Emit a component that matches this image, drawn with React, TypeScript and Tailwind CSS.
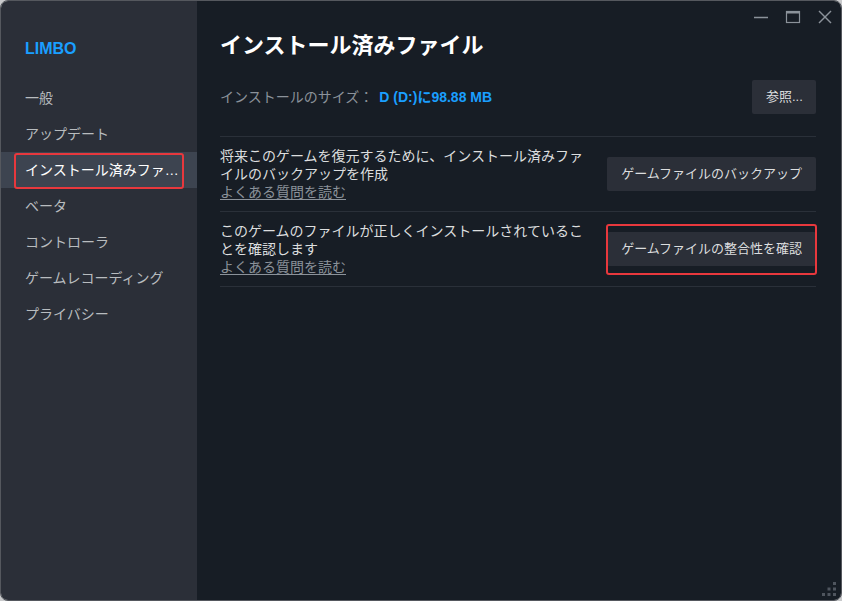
import React from 'react'

const FONT = {
  fontFamily: '"Liberation Sans", "Noto Sans CJK JP", sans-serif',
}

// --- Sidebar ---

const MENU = [
  '一般',
  'アップデート',
  'インストール済みファイル',
  'ベータ',
  'コントローラ',
  'ゲームレコーディング',
  'プライバシー',
]

function Sidebar({ active }: { active: number }) {
  return (
    <aside className="w-[196px] shrink-0 bg-[#2b2f38] flex flex-col">
      <div className="pl-[24px] pt-[38px] h-[58px] leading-[20px] text-[16px] font-bold text-[#1a9fff]">
        LIMBO
      </div>
      <nav className="mt-[21px] flex flex-col">
        {MENU.map((item, i) => (
          <div
            key={item}
            className={`relative h-[36px] flex items-center pl-[24px] pr-[18px] text-[14px] ${
              i === active ? 'bg-[#3d4450] text-white' : 'text-[#b8bcbf]'
            }`}
          >
            <span className="truncate">{i === active ? 'インストール済みファ…' : item}</span>
            {i === active && (
              <span className="absolute left-[13px] right-[13px] top-[1px] -bottom-[1px] border-2 border-[#e8383d] rounded-[3px]" />
            )}
          </div>
        ))}
      </nav>
    </aside>
  )
}

// --- Buttons ---

function Button({ children, className = '' }: { children: React.ReactNode; className?: string }) {
  return (
    <button
      className={`h-[34px] px-[14px] rounded-[2px] bg-[#2b2f38] text-[13px] text-[#dcdedf] whitespace-nowrap ${className}`}
    >
      {children}
    </button>
  )
}

interface RowProps {
  text: string
  action: string
  highlighted?: boolean
}

function Row({ text, action, highlighted }: RowProps) {
  return (
    <div className="flex items-center gap-[16px] border-b border-[#2a3039] min-h-[74px] py-[10px]">
      <div className="flex-1 text-[14px] leading-[18px]">
        <div className="text-[#dcdedf]">{text}</div>
        <a className="text-[#8b929a] underline underline-offset-2">よくある質問を読む</a>
      </div>
      <div className="relative">
        <Button>{action}</Button>
        {highlighted && (
          <span className="absolute -inset-x-[1px] -top-[8px] -bottom-[9px] border-2 border-[#e8383d] rounded-[3px]" />
        )}
      </div>
    </div>
  )
}

// --- Window controls ---

function WindowControls() {
  return (
    <div className="absolute top-[8px] right-[8px] flex items-center gap-[16px] text-[#8b929a]">
      <svg width="16" height="16" viewBox="0 0 16 16">
        <line x1="1" y1="8.5" x2="15" y2="8.5" stroke="currentColor" strokeWidth="1.5" />
      </svg>
      <svg width="16" height="16" viewBox="0 0 16 16" fill="none" stroke="currentColor">
        <rect x="1.5" y="2.5" width="13" height="11" strokeWidth="1.2" />
        <line x1="1.5" y1="3.5" x2="14.5" y2="3.5" strokeWidth="2" />
      </svg>
      <svg width="16" height="16" viewBox="0 0 16 16" fill="none" stroke="currentColor" strokeWidth="1.4">
        <line x1="2" y1="2" x2="14" y2="14" />
        <line x1="14" y1="2" x2="2" y2="14" />
      </svg>
    </div>
  )
}

function ResizeGrip() {
  return (
    <svg className="absolute right-[5px] bottom-[4px]" width="14" height="14" viewBox="0 0 14 14" fill="#4f555e">
      <rect x="11" y="0" width="3" height="3" />
      <rect x="5.5" y="5.5" width="3" height="3" />
      <rect x="11" y="5.5" width="3" height="3" />
      <rect x="0" y="11" width="3" height="3" />
      <rect x="5.5" y="11" width="3" height="3" />
      <rect x="11" y="11" width="3" height="3" />
    </svg>
  )
}

export default function App() {
  return (
    <div className="w-[842px] h-[601px] bg-[#c9cacc]" style={FONT}>
      <div className="relative w-full h-full flex overflow-hidden rounded-[8px] border border-[#55585e]">
        <Sidebar active={2} />
        <main className="flex-1 bg-[#171d25] pl-[23px] pr-[25px]">
          <h1 className="pt-[31px] leading-[28px] text-[22px] font-bold text-white">
            インストール済みファイル
          </h1>
          <div className="mt-[20px] flex items-center justify-between border-b border-[#2a3039] pb-[22px]">
            <div className="text-[14px]">
              <span className="text-[#8b929a]">インストールのサイズ：</span>
              <span className="ml-[6px] font-bold text-[#1a9fff]">D (D:)に98.88 MB</span>
            </div>
            <Button className="w-[64px] px-0">参照...</Button>
          </div>
          <Row
            text="将来このゲームを復元するために、インストール済みファイルのバックアップを作成"
            action="ゲームファイルのバックアップ"
          />
          <Row
            text="このゲームのファイルが正しくインストールされていることを確認します"
            action="ゲームファイルの整合性を確認"
            highlighted
          />
        </main>
        <WindowControls />
        <ResizeGrip />
      </div>
    </div>
  )
}
